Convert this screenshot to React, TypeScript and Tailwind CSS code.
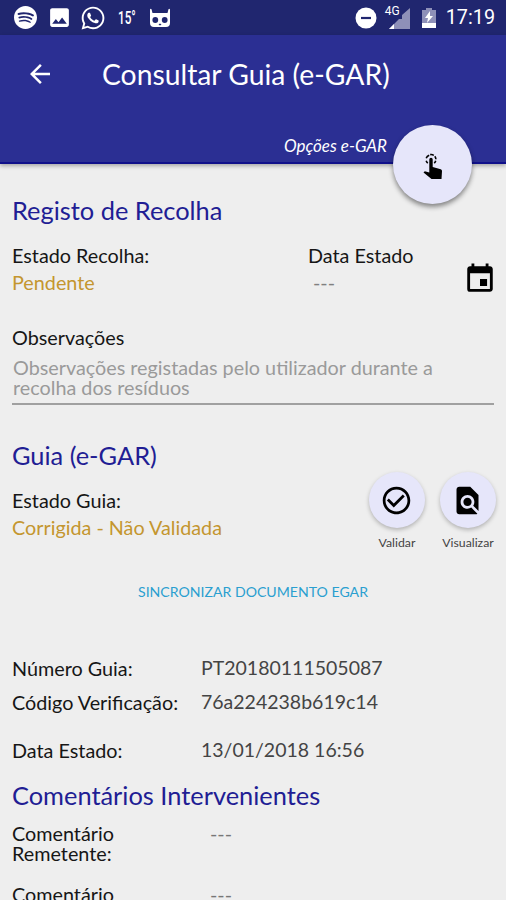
import type { ReactNode } from "react";
import { FaWhatsapp } from "react-icons/fa";
import { MdArrowBack, MdCheckCircleOutline, MdEvent, MdFindInPage, MdPhoto } from "react-icons/md";
import { SiSpotify } from "react-icons/si";

const details = [
  { label: "Número Guia:", value: "PT20180111505087", row: "h-[34px]" },
  { label: "Código Verificação:", value: "76a224238b619c14", row: "h-[48px]" },
  { label: "Data Estado:", value: "13/01/2018 16:56", row: "h-[40px]" },
];

export default function App() {
  return (
    <div className="w-[506px] h-[900px] overflow-hidden flex flex-col bg-[#eeeeee] font-['Lato',sans-serif] text-[19.8px] leading-5 text-[#161616]">
      <StatusBar />
      <header className="relative z-10 h-[129px] shrink-0 bg-[#2b2f93] text-white border-b-2 border-[#10108a] shadow-[0_2px_4px_rgba(0,0,0,0.3)]">
        <div className="flex items-center h-[78px] pl-[25px]">
          <button aria-label="Voltar">
            <MdArrowBack size={30} />
          </button>
          <h1 className="ml-[47px] text-[28.3px] leading-8 whitespace-nowrap">Consultar Guia (e-GAR)</h1>
        </div>
        <div className="flex justify-end pr-[119px] pt-[23px]">
          <span className="text-[17px] italic leading-5 whitespace-nowrap">Opções e-GAR</span>
        </div>
        <button
          aria-label="Opções"
          className="absolute right-[34px] top-[90px] w-[79px] h-[79px] rounded-full bg-[#e6e6fa] text-black flex items-center justify-center shadow-[0_3px_5px_rgba(0,0,0,0.45)]"
        >
          <TouchIcon />
        </button>
      </header>

      <main className="px-3 pt-[31px] shrink-0">
        <SectionTitle>Registo de Recolha</SectionTitle>
        <div className="flex mt-5">
          <div className="w-[296px]">
            <div>Estado Recolha:</div>
            <div className="mt-[7px] text-[#c4962f]">Pendente</div>
          </div>
          <div className="w-[155px]">
            <div>Data Estado</div>
            <div className="mt-[7px] pl-[5px] text-[#808080]">---</div>
          </div>
          <MdEvent size={34} className="mt-[17px] -mr-[5px] shrink-0 text-black" />
        </div>
        <div className="mt-[31px]">Observações</div>
        <div className="mt-[10px] h-[48px] pl-px border-b-2 border-[#a0a0a0] text-[#9a9a9a] whitespace-nowrap">
          Observações registadas pelo utilizador durante a
          <br />
          recolha dos resíduos
        </div>

        <div className="mt-[35px] flex h-[147px] justify-between">
          <div>
            <SectionTitle>Guia (e-GAR)</SectionTitle>
            <div className="mt-5">Estado Guia:</div>
            <div className="mt-[7px] text-[#c4962f]">Corrigida - Não Validada</div>
          </div>
          <div className="flex pt-[32px] -mr-[9px]">
            <RoundAction label="Validar">
              <MdCheckCircleOutline size={33} />
            </RoundAction>
            <RoundAction label="Visualizar">
              <MdFindInPage size={33} />
            </RoundAction>
          </div>
        </div>

        <div className="-mt-[5px] text-center text-[14.1px] leading-5 text-[#2a9fd0]">
          <button>SINCRONIZAR DOCUMENTO EGAR</button>
        </div>

        <div className="mt-[56px]">
          {details.map((d) => (
            <div key={d.label} className={`flex whitespace-nowrap ${d.row}`}>
              <div className="w-[189px]">{d.label}</div>
              <div className="text-[19.5px] text-[#444444]">{d.value}</div>
            </div>
          ))}
        </div>
        <SectionTitle>Comentários Intervenientes</SectionTitle>
        <Comment label={["Comentário", "Remetente:"]} />
        <Comment label={["Comentário"]} />
      </main>
    </div>
  );
}

function StatusBar() {
  return (
    <div className="h-[35px] shrink-0 bg-[#20266f] text-white flex items-center justify-between pl-[14px] pr-[11px]">
      <div className="flex items-center">
        <SiSpotify size={23} />
        <MdPhoto size={25} className="ml-[10px]" />
        <FaWhatsapp size={26} className="ml-[8px]" />
        <span className="ml-[12px] w-[18px] font-['Roboto',sans-serif] text-[18px] leading-5">
          <span className="inline-block origin-left scale-x-[0.65] font-medium">15°</span>
        </span>
        <svg width="22" height="20" viewBox="0 0 22 20" className="ml-[13px]" fill="currentColor">
          <path d="M1 1.500Q1.800 0 2.600 1.500L3.500 5h15l.9-3.500Q20.200 0 21 1.500V15q0 4-4 4H5q-4 0-4-4z" />
          <circle cx="6.300" cy="12" r="2.900" fill="#20266f" />
          <circle cx="15.700" cy="12" r="2.900" fill="#20266f" />
          <path d="m9.500 16.500 1.500-1 1.500 1-1.500 1z" fill="#20266f" />
        </svg>
      </div>
      <div className="flex items-center">
        <svg width="22" height="22" viewBox="0 0 22 22">
          <circle cx="11" cy="11" r="10.500" fill="currentColor" />
          <path d="M6 11h10" stroke="#20266f" strokeWidth="2.200" />
        </svg>
        <div className="relative ml-[8px] w-[25px] h-[23px]">
          <span className="absolute left-0 -top-px font-['Roboto',sans-serif] text-[12px] leading-none">4G</span>
          <svg width="25" height="23" viewBox="0 0 25 23">
            <path d="M25 2v21H4l10-10h3V9z" fill="#8e90b8" />
            <path d="M4 23 9 18v5z" fill="currentColor" />
          </svg>
        </div>
        <svg width="14" height="20" viewBox="0 0 14 20" className="ml-[12px]">
          <path d="M4 0h6v2h4v14H0V2h4z" fill="#8e90b8" />
          <path d="M8 3 3 10h3l-1 5 6-7H8z" fill="currentColor" />
          <path d="M0 15h14v5H0z" fill="currentColor" />
        </svg>
        <span className="ml-[10px] font-['Roboto',sans-serif] text-[19.8px] leading-6">17:19</span>
      </div>
    </div>
  );
}

function TouchIcon() {
  return (
    <svg width="22" height="28" viewBox="0 0 22 28" fill="currentColor" className="mt-1">
      <path
        d="M5.800 10.200a5 5 0 0 1-1.600-2.500M4.200 5.300a5 5 0 0 1 3-3M8.200 1.600a5 5 0 0 1 3.600.7M12.800 3.200a5 5 0 0 1 1.100 3M13.700 7.700a5 5 0 0 1-1.500 2.500"
        fill="none"
        stroke="currentColor"
        strokeWidth="1.600"
      />
      <path d="M7.300 6.500a1.700 1.700 0 0 1 3.400 0v7.500l8 2.300q1.500.5 1.300 2L19.500 26H9.500l-8-6.500 1.300-1.200 4.500 1.200z" />
    </svg>
  );
}

function SectionTitle({ children }: { children: ReactNode }) {
  return <h2 className="text-[25.4px] leading-[30px] text-[#211d94] whitespace-nowrap">{children}</h2>;
}

function RoundAction({ label, children }: { label: string; children: ReactNode }) {
  return (
    <button className="w-[71px] flex flex-col items-center text-black">
      <span className="w-14 h-14 rounded-full bg-[#e6e6fa] flex items-center justify-center shadow-[0_2px_4px_rgba(0,0,0,0.25)]">{children}</span>
      <span className="mt-[7px] pl-px text-[12.3px] leading-4 text-[#444444]">{label}</span>
    </button>
  );
}

function Comment({ label }: { label: string[] }) {
  return (
    <div className="flex mt-[13px] mb-[21px]">
      <div className="w-[198px]">
        {label.map((line) => (
          <div key={line}>{line}</div>
        ))}
      </div>
      <div className="text-[#777777]">---</div>
    </div>
  );
}
